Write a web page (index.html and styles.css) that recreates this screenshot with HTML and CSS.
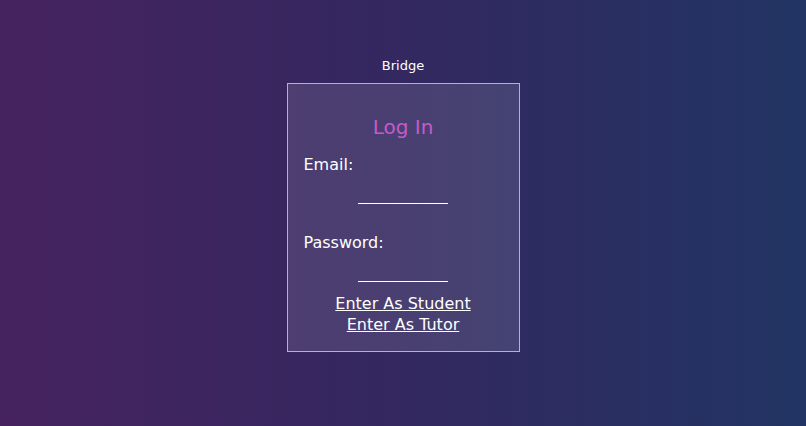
FILE: index.html
```html
<!DOCTYPE html>
<html>
<head>
<meta charset="utf-8">
<link rel="stylesheet" href="styles.css">
</head>
<body>
<div class="page">
  <div class="title">Bridge</div>
  <form class="card">
    <h1 class="heading">Log In</h1>
    <label class="label">Email:</label>
    <input class="field" type="text">
    <label class="label label-second">Password:</label>
    <input class="field" type="password">
    <div class="links">
      <a class="link" href="#">Enter As Student</a>
      <a class="link" href="#">Enter As Tutor</a>
    </div>
  </form>
</div>
</body>
</html>
```
FILE: styles.css
```css
html, body {
  margin: 0;
  padding: 0;
}
body {
  width: 806px;
  height: 426px;
  overflow: hidden;
  background: linear-gradient(90deg, #46235f 0%, #352760 45%, #213463 100%);
  font-family: "DejaVu Sans", sans-serif;
  color: #ffffff;
}
.page {
  display: flex;
  flex-direction: column;
  align-items: center;
}
.title {
  font-size: 13px;
  line-height: 18px;
  margin-top: 57px;
  margin-bottom: 8px;
}
.card {
  box-sizing: border-box;
  width: 233px;
  border: 1px solid rgba(255, 255, 255, 0.6);
  background: rgba(255, 255, 255, 0.11);
  padding: 0 16px 16px;
  display: flex;
  flex-direction: column;
  margin: 0;
}
.heading {
  margin: 30px 0 14px;
  font-size: 20px;
  line-height: 26px;
  font-weight: normal;
  text-align: center;
  color: #c35bc8;
}
.label {
  font-size: 16px;
  line-height: 22px;
}
.label-second {
  margin-top: 28px;
}
.field {
  align-self: center;
  box-sizing: border-box;
  width: 90px;
  height: 20px;
  margin-top: 8px;
  background: transparent;
  border: none;
  border-bottom: 1.5px solid #ffffff;
  outline: none;
  padding: 0;
  color: #fff;
}
.links {
  margin-top: 11px;
  display: flex;
  flex-direction: column;
  align-items: center;
}
.link {
  font-size: 16px;
  line-height: 21px;
  color: #ffffff;
  text-decoration: underline;
}
```
